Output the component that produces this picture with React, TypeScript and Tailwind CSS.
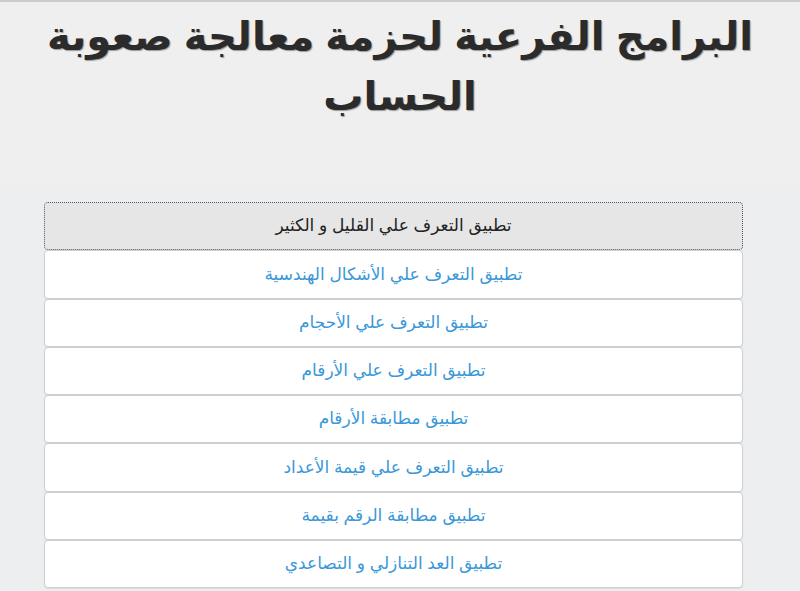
const items = [
    'تطبيق التعرف علي القليل و الكثير',
    'تطبيق التعرف علي الأشكال الهندسية',
    'تطبيق التعرف علي الأحجام',
    'تطبيق التعرف علي الأرقام',
    'تطبيق مطابقة الأرقام',
    'تطبيق التعرف علي قيمة الأعداد',
    'تطبيق مطابقة الرقم بقيمة',
    'تطبيق العد التنازلي و التصاعدي',
];

export default function App() {
    return (
        <div
            dir="rtl"
            className="min-h-[591px] w-[800px] bg-[#eceeef] font-['Liberation_Sans','DejaVu_Sans',sans-serif]"
        >
            <header className="h-[184px] border-t-2 border-[#cccccc] bg-[#efefef] pt-[4px]">
                <h1 className="mx-auto w-[790px] text-center text-[40px] font-bold leading-[60px] text-[#2b2b2b] [text-shadow:1px_1px_1px_#999]">
                    البرامج الفرعية لحزمة معالجة صعوبة الحساب
                </h1>
            </header>
            <div className="flex flex-col pt-[18px]">
                <div className="ml-[44px] mr-auto flex w-[699px] flex-col">
                    {items.map((item, i) => (
                        <div
                            key={item}
                            className={
                                i === 0
                                    ? 'flex h-[48.25px] items-center justify-center rounded-[4px] border border-dotted border-[#555] bg-[#e6e6e6] text-[17px] text-[#222]'
                                    : 'flex h-[48.25px] items-center justify-center rounded-[4px] border border-[#cfcfcf] bg-white text-[17px] text-[#3a97d8] shadow-[0_1px_1px_rgba(0,0,0,0.08)]'
                            }
                        >
                            {item}
                        </div>
                    ))}
                </div>
            </div>
        </div>
    );
}
